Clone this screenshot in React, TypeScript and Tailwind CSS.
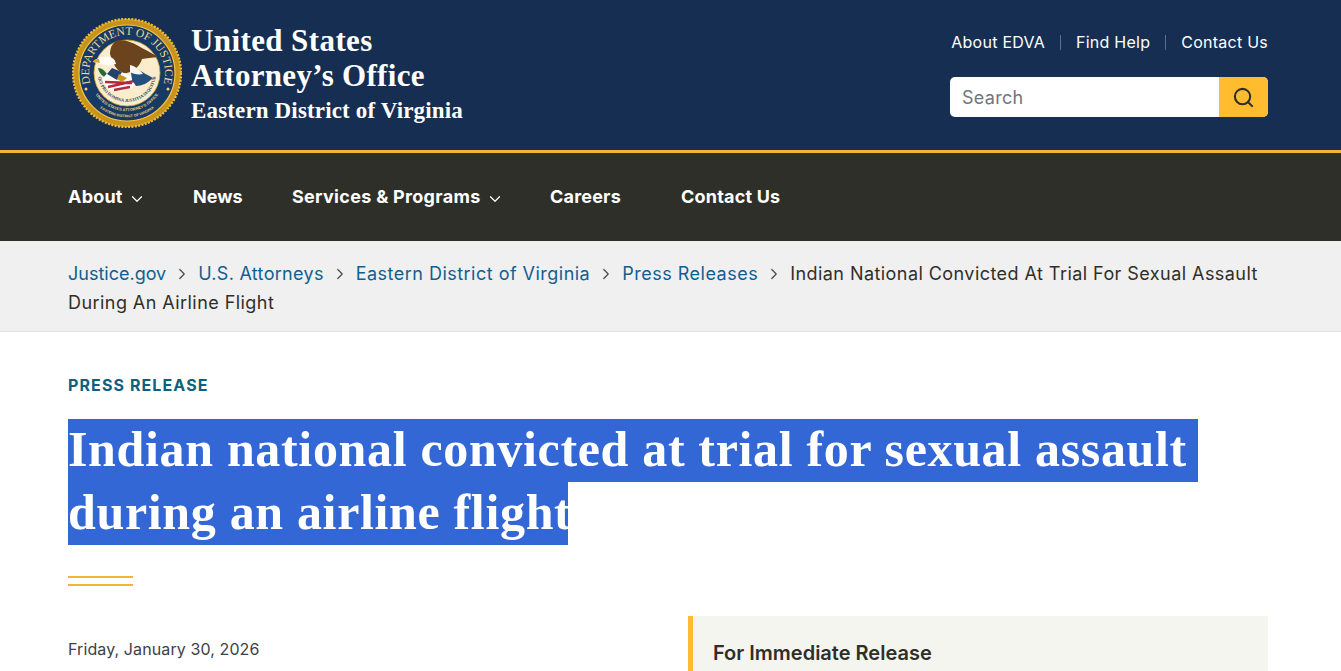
import { Fragment } from 'react'
import { ChevronDown, ChevronRight, Search } from 'lucide-react'

const sans = '[font-family:Inter,"Liberation_Sans",sans-serif]'

const crumbs = [
  { name: 'Justice.gov', className: 'tracking-[0px]' },
  { name: 'U.S. Attorneys', className: 'tracking-[0.3px]' },
  { name: 'Eastern District of Virginia', className: 'tracking-[0.48px]' },
  { name: 'Press Releases', className: 'tracking-[0.5px]' },
]

const navigation = [
  { name: 'About', menu: true, className: 'w-[125px]' },
  { name: 'News', menu: false, className: 'w-[99px] tracking-[0px]' },
  { name: 'Services & Programs', menu: true, className: 'w-[258px] tracking-[0.3px]' },
  { name: 'Careers', menu: false, className: 'w-[131px]' },
  { name: 'Contact Us', menu: false, className: '' },
]

function Seal() {
  return (
    <svg viewBox="0 0 110 110" className="h-[110px] w-[110px] shrink-0">
      <defs>
        <path id="sealTop" d="M 36 87.9 A 38 38 0 1 1 74 87.9" />
        <path id="sealBottom1" d="M 22 74 A 38 38 0 0 0 88 74" />
        <path id="sealBottom2" d="M 20 82 A 44 44 0 0 0 90 82" />
        <path id="sealMotto" d="M 26 55 A 29 29 0 0 0 84 55" />
      </defs>
      <circle cx="55" cy="55" r="54" fill="#c8921b" />
      <circle cx="55" cy="55" r="54" fill="none" stroke="#eabb3e" strokeWidth="2.4" strokeDasharray="2 1.4" />
      <circle cx="55" cy="55" r="48" fill="#163a63" stroke="#f0c64d" strokeWidth="1.2" />
      <circle cx="55" cy="55" r="33" fill="#fbeccb" stroke="#d9a72f" strokeWidth="0.8" />
      <text fill="#f0d795" fontSize="11.5" fontFamily="Liberation Serif, serif">
        <textPath href="#sealTop" startOffset="50%" textAnchor="middle">DEPARTMENT OF JUSTICE</textPath>
      </text>
      <text fill="#ecd08a" fontSize="4" fontWeight="700" fontFamily="Liberation Sans, sans-serif">
        <textPath href="#sealBottom1" startOffset="50%" textAnchor="middle">UNITED STATES ATTORNEY'S OFFICE</textPath>
      </text>
      <text fill="#ecd08a" fontSize="3.6" fontWeight="700" fontFamily="Liberation Sans, sans-serif">
        <textPath href="#sealBottom2" startOffset="50%" textAnchor="middle">EASTERN DISTRICT OF VIRGINIA</textPath>
      </text>
      <text fill="#2a3a5a" fontSize="4.4" fontWeight="700" fontFamily="Liberation Serif, serif">
        <textPath href="#sealMotto" startOffset="50%" textAnchor="middle">QUI PRO DOMINA JUSTITIA SEQUITUR</textPath>
      </text>
      <circle cx="14" cy="71" r="1.5" fill="#ecd08a" />
      <circle cx="96" cy="71" r="1.5" fill="#ecd08a" />
      {/* wing and body */}
      <path d="M38 36 C38 28 42 23 47 22 C55 22 62 25 70 30 C76 33 81 36 86 39 C80 40 74 40 70 41 C68 47 64 51 60 53 C55 56 50 56 46 52 C42 48 40 42 38 36 Z" fill="#6b431d" />
      {/* head */}
      <path d="M21 44 C24 40 31 38 37 39 C40 39 43 41 44 46 C38 48 33 47 29 46 C26 45 24 45 21 44 Z" fill="#fff" />
      <path d="M21 44 C22 41 25 41 27 41 L28 45 Z" fill="#d9a72f" />
      {/* branch */}
      <path d="M26 50 C30 50 34 53 37 60 C32 60 27 56 26 50 Z" fill="#2c6a35" />
      {/* shield */}
      <path d="M30 61 L40 50 L66 61 L60 70 C53 73 45 74 39 72 C35 70 32 66 30 61 Z" fill="#fff" />
      <path d="M33 64 L60 65 M36 69 L62 63 M42 72 L58 69" stroke="#b8283c" strokeWidth="2.4" fill="none" />
      <path d="M40 50 L50 54 L45 62 L35 56 Z" fill="#24406e" />
      <path d="M47 56 L55 60 L50 64 L45 61 Z" fill="#c8921b" />
      {/* mountain */}
      <path d="M58 48 C64 50 70 54 81 60 C76 65 70 68 64 68 L60 62 Z" fill="#23507f" />
      <path d="M58 47 C63 48 68 52 71 56 C66 57 61 56 58 54 Z" fill="#f6f6f6" />
    </svg>
  )
}

export default function App() {
  return (
    <div className={`h-screen overflow-hidden bg-white text-[#2f2f2a] ${sans}`}>
      <header className="flex h-[153px] items-start justify-between border-b-[3px] border-[#f2b632] bg-[#162e51] pl-[72px] pr-[73px]">
        <a href="#" className="mt-[18px] flex items-start gap-[9px] text-white no-underline">
          <Seal />
          <div className='[font-family:"Liberation_Serif",serif] font-bold'>
            <div className="mt-[5px] text-[31px] leading-[35px] tracking-[0.4px]">United States</div>
            <div className="text-[31px] leading-[35px] tracking-[0.3px]">Attorney’s Office</div>
            <div className="mt-[1px] text-[23px] leading-[33px] tracking-[0.15px]">Eastern District of Virginia</div>
          </div>
        </a>
        <div className="mt-[32px] flex w-[318px] flex-col items-end">
          <div className="flex h-[20px] items-center text-[16px] leading-[20px] tracking-[0.25px] text-white">
            <a href="#">About EDVA</a>
            <span className="mx-[15px] h-[15px] w-px bg-[#5c6f8c]" />
            <a href="#">Find Help</a>
            <span className="mx-[15px] h-[15px] w-px bg-[#5c6f8c]" />
            <a href="#">Contact Us</a>
          </div>
          <form className="mt-[25px] flex h-[40px] w-full overflow-hidden rounded-[5px] bg-white">
            <input
              placeholder="Search"
              className="min-w-0 flex-1 px-[12px] text-[18px] tracking-[0.3px] text-[#71767a] outline-none placeholder:text-[#71767a]"
            />
            <button type="button" className="flex w-[49px] items-center justify-center bg-[#ffbc2e] text-[#2f2f2a]">
              <Search size={23} strokeWidth={2.2} />
            </button>
          </form>
        </div>
      </header>

      <nav className="flex h-[88px] items-center bg-[#2f2f2a] pl-[68px] text-[18px] font-bold leading-[24px] tracking-[0.2px] text-white">
        {navigation.map((item) => (
          <a key={item.name} href="#" className={`flex items-center ${item.className}`}>
            {item.name}
            {item.menu && <ChevronDown size={18} strokeWidth={1.6} className="ml-[5px] mt-[3px]" />}
          </a>
        ))}
      </nav>

      <div className="h-[91px] border-b border-[#dfe1e2] bg-[#f0f0f0] pl-[68px] pr-[73px] pt-[18px] text-[18px] leading-[29px] tracking-[0.44px]">
        {crumbs.map((crumb) => (
          <Fragment key={crumb.name}>
            <a href="#" className={`text-[#0f5f93] ${crumb.className}`}>{crumb.name}</a>
            <ChevronRight size={18} strokeWidth={1.6} className="mx-[7px] inline-block align-[-3px] text-[#4a4a45]" />
          </Fragment>
        ))}
        <span>Indian National Convicted At Trial For Sexual Assault During An Airline Flight</span>
      </div>

      <main className="pl-[68px] pr-[73px]">
        <div className="mt-[42px] text-[16px] font-bold leading-[22px] tracking-[1.1px] text-[#0f5f7f]">PRESS RELEASE</div>
        <h1 className='mt-[23px] [font-family:"Liberation_Serif",serif] text-[50px] font-bold leading-[61px] tracking-[0.66px] text-white'>
          <div className="h-[63px] w-[1130px] bg-[#3367d6]">Indian national convicted at trial for sexual assault</div>
          <div className="h-[63px] w-[500px] whitespace-nowrap bg-[#3367d6]">during an airline flight</div>
        </h1>
        <div className="mt-[31px] h-[10px] w-[65px] border-y-2 border-[#f2b632]" />
        <div className="mt-[30px] flex">
          <div className="w-[620px] pt-[23px] text-[16px] leading-[20px] tracking-[0.1px] text-[#3d4045]">Friday, January 30, 2026</div>
          <aside className="h-[120px] flex-1 border-l-[5px] border-[#ffbc2e] bg-[#f5f5f0] pl-[20px] pt-[25px] text-[20px] font-semibold leading-[24px]">
            For Immediate Release
          </aside>
        </div>
      </main>
    </div>
  )
}
